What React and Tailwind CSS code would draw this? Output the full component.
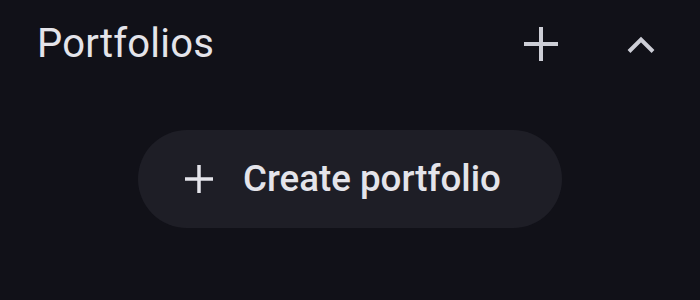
import { useState } from 'react';

// header icons drawn to match the reference strokes
function PlusIcon({ size = 34, stroke = 4, className = '' }) {
  const h = size / 2;
  return (
    <svg width={size} height={size} viewBox={`0 0 ${size} ${size}`} className={className} fill="none">
      <path d={`M0 ${h}H${size}M${h} 0V${size}`} stroke="currentColor" strokeWidth={stroke} />
    </svg>
  );
}

function ChevronUp() {
  return (
    <svg width="30" height="22" viewBox="0 0 30 22" fill="none">
      <path d="M3 18.5L15 6.5L27 18.5" stroke="currentColor" strokeWidth="4" />
    </svg>
  );
}

export default function App() {
  const [open, setOpen] = useState(true);

  return (
    <div
      className="w-full h-[300px] bg-[#111118] text-[#e4e4ea] overflow-hidden"
      style={{ fontFamily: 'Roboto, "Noto Sans", sans-serif' }}
    >
      {/* Section header */}
      <div className="flex items-center justify-between pl-[37px] pr-[44px] pt-[20px] h-[68px]">
        <h2 className="text-[40px] leading-none font-normal tracking-[0.2px]">Portfolios</h2>
        <div className="flex items-center gap-[68px] text-[#cdced6]">
          <button className="flex items-center justify-center">
            <PlusIcon />
          </button>
          <button className="flex items-center justify-center" onClick={() => setOpen(!open)}>
            <ChevronUp />
          </button>
        </div>
      </div>

      <div className="flex justify-center pt-[62px]">
        <button className="inline-flex items-center h-[98px] w-[424px] rounded-full bg-[#1e1e26] pl-[47px]">
          <PlusIcon size={28} stroke={3.5} className="text-[#e4e4ea]" />
          <span className="ml-[30px] text-[36.7px] leading-none font-medium text-[#e4e4ea]">Create portfolio</span>
        </button>
      </div>
    </div>
  );
}
